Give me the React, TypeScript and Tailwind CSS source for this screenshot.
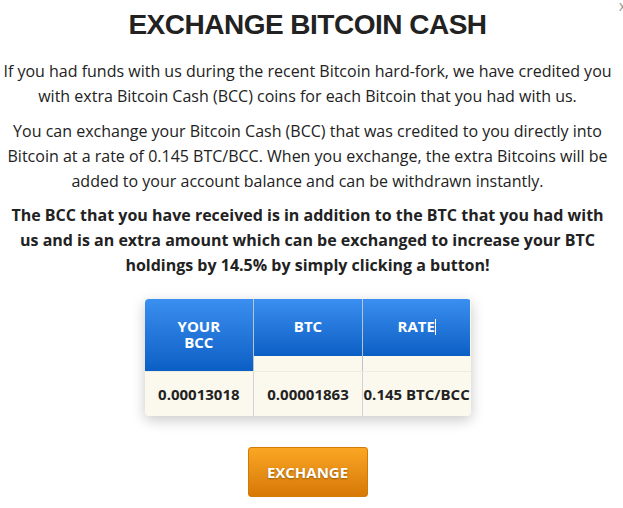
import React from 'react'

const headBlue = 'bg-gradient-to-b from-[#3a8ff0] to-[#0a5fc4]'

const App = () => {
  return (
    <div className="relative w-[623px] h-[508px] bg-white overflow-hidden font-['Open_Sans',sans-serif] text-[#222]">
      <span className="absolute right-[-3px] top-[-4px] text-[14px] text-[#999] font-['Liberation_Sans',sans-serif]">x</span>

      <div className="w-[615px]">
        <h1 className="text-center font-['Liberation_Sans',Arial,sans-serif] font-bold text-[28px] tracking-[-0.5px] leading-[28px] pt-[11px] text-[#222]">
          EXCHANGE BITCOIN CASH
        </h1>

        <div className="text-center text-[16px] leading-[25px]">
          <p className="mt-[20px]">
            If you had funds with us during the recent Bitcoin hard-fork, we have credited you
            with extra Bitcoin Cash (BCC) coins for each Bitcoin that you had with us.
          </p>
          <p className="mt-[10px] px-[2px]">
            You can exchange your Bitcoin Cash (BCC) that was credited to you directly into
            Bitcoin at a rate of 0.145 BTC/BCC. When you exchange, the extra Bitcoins will be
            added to your account balance and can be withdrawn instantly.
          </p>
          <p className="mt-[9px] px-[8px] font-bold">
            The BCC that you have received is in addition to the BTC that you had with
            us and is an extra amount which can be exchanged to increase your BTC
            holdings by 14.5% by simply clicking a button!
          </p>
        </div>

        <div className="flex justify-center mt-[21px]">
          <div className="w-[326px] rounded-[4px] overflow-hidden shadow-[0_4px_14px_rgba(0,0,0,0.22)] bg-[#fbf9ee]">
            <div className="grid grid-cols-3 h-[72px] text-white font-bold text-[15px] leading-[16px] text-center">
              <div className={`${headBlue} flex items-start justify-center pt-[19px]`}>
                YOUR<br />BCC
              </div>
              <div className={`${headBlue} bg-no-repeat bg-[length:100%_57px] border-l border-[#b9c3cf] flex items-start justify-center pt-[19px]`}>
                BTC
              </div>
              <div className={`${headBlue} bg-no-repeat bg-[length:100%_57px] border-l border-[#b9c3cf] flex items-start justify-center pt-[19px]`}>
                <span>RATE<span className="inline-block w-px h-[16px] bg-white align-[-3px]" /></span>
              </div>
            </div>
            <div className="grid grid-cols-3 h-[45px] items-center text-center text-[15px] font-bold text-[#222] border-t border-[#efece0]">
              <div className="h-full flex items-center justify-center">0.00013018</div>
              <div className="h-full flex items-center justify-center border-l border-[#cfd3d8]">0.00001863</div>
              <div className="h-full flex items-center justify-center border-l border-[#cfd3d8] whitespace-nowrap">0.145 BTC/BCC</div>
            </div>
          </div>
        </div>

        <div className="flex justify-center mt-[31px]">
          <button className="w-[120px] h-[50px] rounded-[3px] border border-[#d27a06] bg-gradient-to-b from-[#fba623] to-[#d67905] text-white font-bold text-[15px] [text-shadow:0_1px_2px_rgba(0,0,0,0.35)]">
            EXCHANGE
          </button>
        </div>
      </div>
    </div>
  )
}

export default App
